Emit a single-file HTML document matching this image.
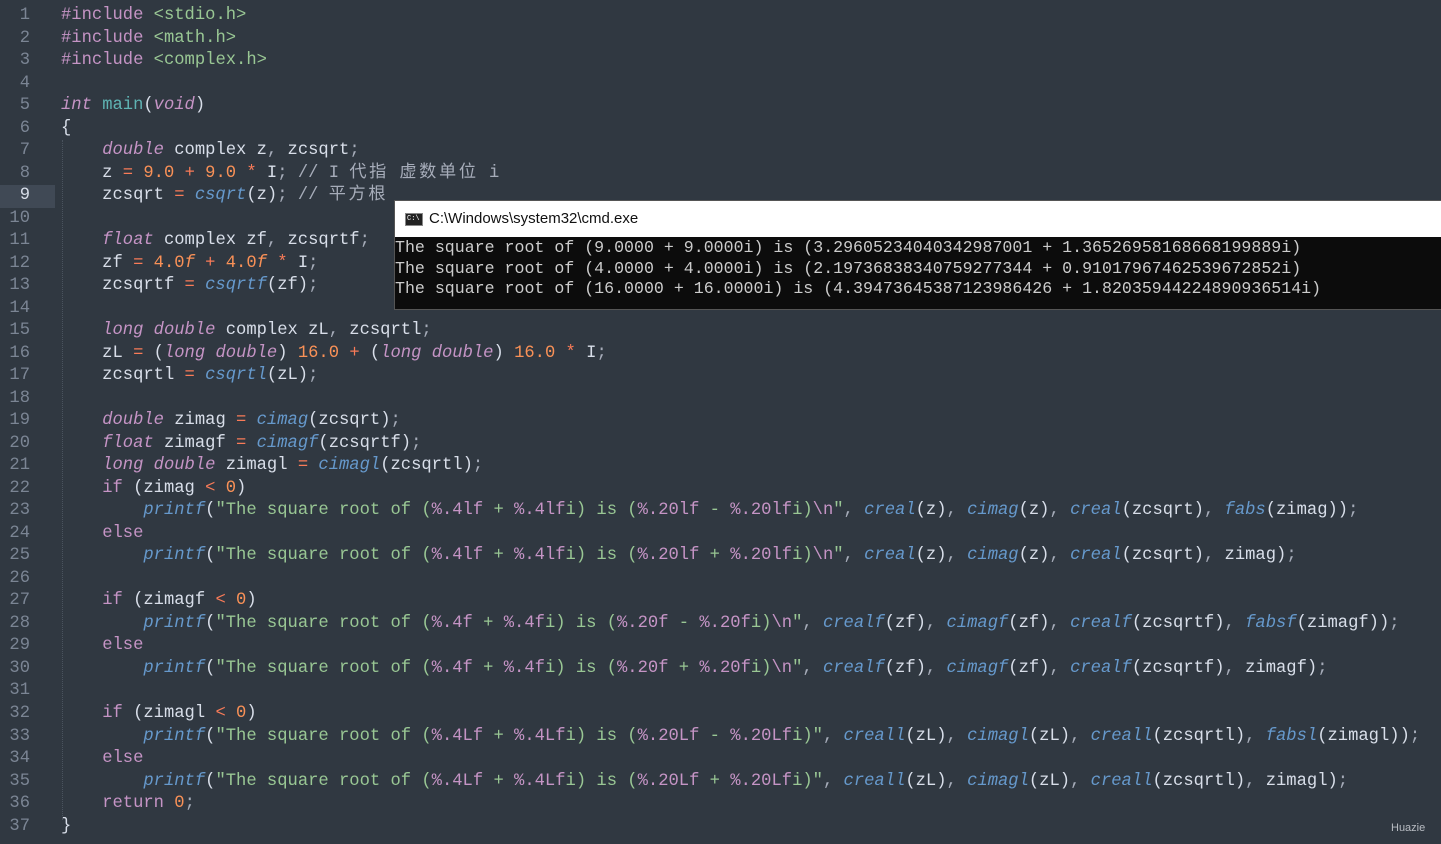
<!DOCTYPE html>
<html><head><meta charset="utf-8"><style>
html,body{margin:0;padding:0;width:1441px;height:844px;overflow:hidden;background:#303841;}
#ed{position:absolute;left:0;top:5px;}
.l{position:relative;height:22.53px;line-height:22.53px;white-space:pre;font-family:"Liberation Mono","Noto Sans CJK SC",monospace;font-size:17.16px;color:#d8dee9;}
.l .ln{position:absolute;left:0;width:30px;text-align:right;color:#7b8594;}
.l .cd{position:absolute;left:61px;}
.cur .ln{color:#d8dee9;}
.hl{position:absolute;left:0;top:0;width:55px;height:22.53px;background:#404955;}
.k{color:#c594c5;font-style:italic}
.c{color:#c594c5}
.f{color:#6699cc;font-style:italic}
.s{color:#99c794}
.n{color:#f99157}
.o{color:#f97b58}
.p{color:#c594c5}
.m{color:#5fb3b3}
.g{color:#a6acb9}
.cm{color:#a6acb9}
.cj{letter-spacing:2.7px}
#cmd{position:absolute;left:394px;top:200px;width:1047px;height:110px;background:#0c0c0c;border:1px solid #555;border-right:none;box-sizing:border-box;}
#tb{height:36px;background:#fff;position:relative;font-family:"Liberation Sans",sans-serif;font-size:15px;color:#111;}
#tb span{position:absolute;left:34px;top:9px;}
#ic{position:absolute;left:10px;top:12px;width:18px;height:13px;background:#222;border:1px solid #888;box-sizing:border-box;}
#ic:after{content:"C:\\";position:absolute;left:1px;top:1px;font-size:7px;color:#fff;font-family:"Liberation Mono",monospace;line-height:8px}
.o2{position:absolute;left:0;white-space:pre;font-family:"Liberation Mono","Noto Serif CJK SC",monospace;font-size:16.6px;color:#cccccc;line-height:20.5px;}
#wm{position:absolute;left:1391px;top:822px;font-family:"Liberation Sans",sans-serif;font-size:11px;color:#b8bcc2;}
.guide{position:absolute;left:62px;top:140px;width:0;height:680px;border-left:1px dotted #4a535e;}
</style></head><body>
<div id="ed">
<div class="l"><span class="ln">1</span><span class="cd"><span class="p">#include</span> <span class="s">&lt;stdio.h&gt;</span></span></div>
<div class="l"><span class="ln">2</span><span class="cd"><span class="p">#include</span> <span class="s">&lt;math.h&gt;</span></span></div>
<div class="l"><span class="ln">3</span><span class="cd"><span class="p">#include</span> <span class="s">&lt;complex.h&gt;</span></span></div>
<div class="l"><span class="ln">4</span></div>
<div class="l"><span class="ln">5</span><span class="cd"><span class="k">int</span> <span class="m">main</span>(<span class="k">void</span>)</span></div>
<div class="l"><span class="ln">6</span><span class="cd">{</span></div>
<div class="l"><span class="ln">7</span><span class="cd">    <span class="k">double</span> complex z<span class="g">,</span> zcsqrt<span class="g">;</span></span></div>
<div class="l"><span class="ln">8</span><span class="cd">    z <span class="o">=</span> <span class="n">9.0</span> <span class="o">+</span> <span class="n">9.0</span> <span class="o">*</span> I<span class="g">;</span> <span class="cm">// I <span class="cj">代指</span> <span class="cj">虚数单位</span> i</span></span></div>
<div class="l cur"><div class="hl"></div><span class="ln">9</span><span class="cd">    zcsqrt <span class="o">=</span> <span class="f">csqrt</span>(z)<span class="g">;</span> <span class="cm">// <span class="cj">平方根</span></span></span></div>
<div class="l"><span class="ln">10</span></div>
<div class="l"><span class="ln">11</span><span class="cd">    <span class="k">float</span> complex zf<span class="g">,</span> zcsqrtf<span class="g">;</span></span></div>
<div class="l"><span class="ln">12</span><span class="cd">    zf <span class="o">=</span> <span class="n">4.0<i>f</i></span> <span class="o">+</span> <span class="n">4.0<i>f</i></span> <span class="o">*</span> I<span class="g">;</span></span></div>
<div class="l"><span class="ln">13</span><span class="cd">    zcsqrtf <span class="o">=</span> <span class="f">csqrtf</span>(zf)<span class="g">;</span></span></div>
<div class="l"><span class="ln">14</span></div>
<div class="l"><span class="ln">15</span><span class="cd">    <span class="k">long</span> <span class="k">double</span> complex zL<span class="g">,</span> zcsqrtl<span class="g">;</span></span></div>
<div class="l"><span class="ln">16</span><span class="cd">    zL <span class="o">=</span> (<span class="k">long</span> <span class="k">double</span>) <span class="n">16.0</span> <span class="o">+</span> (<span class="k">long</span> <span class="k">double</span>) <span class="n">16.0</span> <span class="o">*</span> I<span class="g">;</span></span></div>
<div class="l"><span class="ln">17</span><span class="cd">    zcsqrtl <span class="o">=</span> <span class="f">csqrtl</span>(zL)<span class="g">;</span></span></div>
<div class="l"><span class="ln">18</span></div>
<div class="l"><span class="ln">19</span><span class="cd">    <span class="k">double</span> zimag <span class="o">=</span> <span class="f">cimag</span>(zcsqrt)<span class="g">;</span></span></div>
<div class="l"><span class="ln">20</span><span class="cd">    <span class="k">float</span> zimagf <span class="o">=</span> <span class="f">cimagf</span>(zcsqrtf)<span class="g">;</span></span></div>
<div class="l"><span class="ln">21</span><span class="cd">    <span class="k">long</span> <span class="k">double</span> zimagl <span class="o">=</span> <span class="f">cimagl</span>(zcsqrtl)<span class="g">;</span></span></div>
<div class="l"><span class="ln">22</span><span class="cd">    <span class="c">if</span> (zimag <span class="o">&lt;</span> <span class="n">0</span>)</span></div>
<div class="l"><span class="ln">23</span><span class="cd">        <span class="f">printf</span>(<span class="s">"The square root of (<span class="p">%.4lf</span> + <span class="p">%.4lf</span>i) is (<span class="p">%.20lf</span> - <span class="p">%.20lf</span>i)<span class="p">\n</span>"</span><span class="g">,</span> <span class="f">creal</span>(z)<span class="g">,</span> <span class="f">cimag</span>(z)<span class="g">,</span> <span class="f">creal</span>(zcsqrt)<span class="g">,</span> <span class="f">fabs</span>(zimag))<span class="g">;</span></span></div>
<div class="l"><span class="ln">24</span><span class="cd">    <span class="c">else</span></span></div>
<div class="l"><span class="ln">25</span><span class="cd">        <span class="f">printf</span>(<span class="s">"The square root of (<span class="p">%.4lf</span> + <span class="p">%.4lf</span>i) is (<span class="p">%.20lf</span> + <span class="p">%.20lf</span>i)<span class="p">\n</span>"</span><span class="g">,</span> <span class="f">creal</span>(z)<span class="g">,</span> <span class="f">cimag</span>(z)<span class="g">,</span> <span class="f">creal</span>(zcsqrt)<span class="g">,</span> zimag)<span class="g">;</span></span></div>
<div class="l"><span class="ln">26</span></div>
<div class="l"><span class="ln">27</span><span class="cd">    <span class="c">if</span> (zimagf <span class="o">&lt;</span> <span class="n">0</span>)</span></div>
<div class="l"><span class="ln">28</span><span class="cd">        <span class="f">printf</span>(<span class="s">"The square root of (<span class="p">%.4f</span> + <span class="p">%.4f</span>i) is (<span class="p">%.20f</span> - <span class="p">%.20f</span>i)<span class="p">\n</span>"</span><span class="g">,</span> <span class="f">crealf</span>(zf)<span class="g">,</span> <span class="f">cimagf</span>(zf)<span class="g">,</span> <span class="f">crealf</span>(zcsqrtf)<span class="g">,</span> <span class="f">fabsf</span>(zimagf))<span class="g">;</span></span></div>
<div class="l"><span class="ln">29</span><span class="cd">    <span class="c">else</span></span></div>
<div class="l"><span class="ln">30</span><span class="cd">        <span class="f">printf</span>(<span class="s">"The square root of (<span class="p">%.4f</span> + <span class="p">%.4f</span>i) is (<span class="p">%.20f</span> + <span class="p">%.20f</span>i)<span class="p">\n</span>"</span><span class="g">,</span> <span class="f">crealf</span>(zf)<span class="g">,</span> <span class="f">cimagf</span>(zf)<span class="g">,</span> <span class="f">crealf</span>(zcsqrtf)<span class="g">,</span> zimagf)<span class="g">;</span></span></div>
<div class="l"><span class="ln">31</span></div>
<div class="l"><span class="ln">32</span><span class="cd">    <span class="c">if</span> (zimagl <span class="o">&lt;</span> <span class="n">0</span>)</span></div>
<div class="l"><span class="ln">33</span><span class="cd">        <span class="f">printf</span>(<span class="s">"The square root of (<span class="p">%.4Lf</span> + <span class="p">%.4Lf</span>i) is (<span class="p">%.20Lf</span> - <span class="p">%.20Lf</span>i)"</span><span class="g">,</span> <span class="f">creall</span>(zL)<span class="g">,</span> <span class="f">cimagl</span>(zL)<span class="g">,</span> <span class="f">creall</span>(zcsqrtl)<span class="g">,</span> <span class="f">fabsl</span>(zimagl))<span class="g">;</span></span></div>
<div class="l"><span class="ln">34</span><span class="cd">    <span class="c">else</span></span></div>
<div class="l"><span class="ln">35</span><span class="cd">        <span class="f">printf</span>(<span class="s">"The square root of (<span class="p">%.4Lf</span> + <span class="p">%.4Lf</span>i) is (<span class="p">%.20Lf</span> + <span class="p">%.20Lf</span>i)"</span><span class="g">,</span> <span class="f">creall</span>(zL)<span class="g">,</span> <span class="f">cimagl</span>(zL)<span class="g">,</span> <span class="f">creall</span>(zcsqrtl)<span class="g">,</span> zimagl)<span class="g">;</span></span></div>
<div class="l"><span class="ln">36</span><span class="cd">    <span class="c">return</span> <span class="n">0</span><span class="g">;</span></span></div>
<div class="l"><span class="ln">37</span><span class="cd">}</span></div>
</div>
<div class="guide"></div>
<div id="cmd">
<div id="tb"><div id="ic"></div><span>C:\Windows\system32\cmd.exe</span></div>
<div class="o2" style="top:37px">The square root of (9.0000 + 9.0000i) is (3.29605234040342987001 + 1.36526958168668199889i)</div>
<div class="o2" style="top:57.5px">The square root of (4.0000 + 4.0000i) is (2.19736838340759277344 + 0.91017967462539672852i)</div>
<div class="o2" style="top:78px">The square root of (16.0000 + 16.0000i) is (4.39473645387123986426 + 1.82035944224890936514i)</div>
</div>
<div id="wm">Huazie</div>
</body></html>
